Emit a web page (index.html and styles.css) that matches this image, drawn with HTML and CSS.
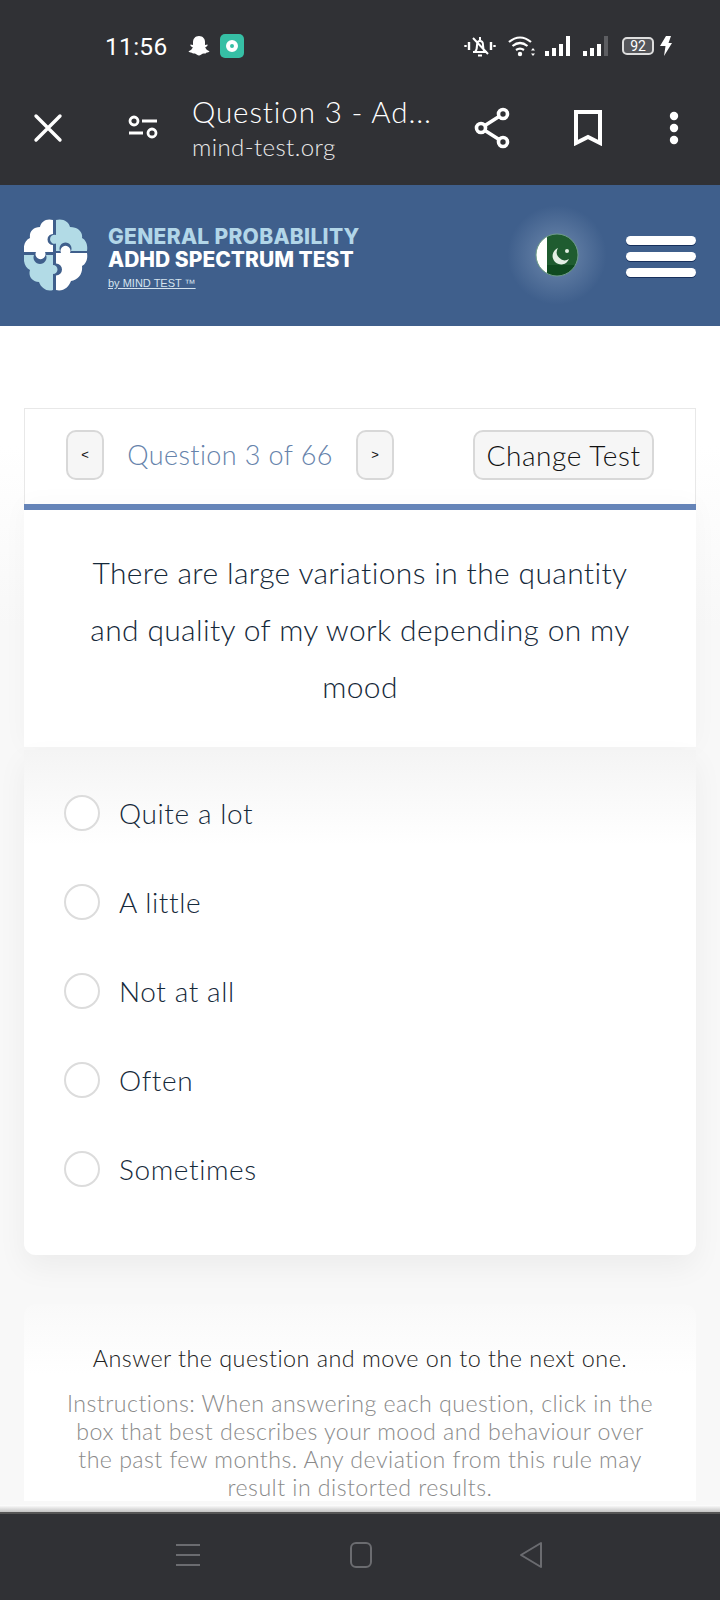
FILE: index.html
```html
<!DOCTYPE html>
<html lang="en">
<head>
    <meta charset="UTF-8">
    <meta name="viewport" content="width=device-width, initial-scale=1.0">
    <title>Question 3 - ADHD Spectrum Test</title>
    <link rel="stylesheet" href="styles.css">
</head>
<body>
    <div class="phone-top">
        <div class="status-bar">
            <div class="status-left">
                <span class="clock">11:56</span>
                <svg class="snap" viewBox="0 0 24 24"><path d="M12 2c4 0 6 3 6 6v3l2.500-.5c.5 1-.5 2-2.300 2.800.7 2 2 3.200 4.300 4-.3 1-1.800 1.200-3.300 1.500-.6 1.300-2 .5-3.700 1-1 .4-2 1.700-3.500 1.700s-2.500-1.300-3.500-1.700c-1.700-.5-3.100.3-3.700-1-1.500-.3-3-.5-3.300-1.500 2.300-.8 3.600-2 4.300-4C3.800 12.500 3 11.500 3.500 10.500L6 11V8c0-3 2-6 6-6z"/></svg>
                <span class="app-badge"><span class="app-disc"></span></span>
            </div>
            <div class="status-right">
                <svg class="ico-bell" viewBox="0 0 32 24" fill="none" stroke="#fff" stroke-width="2">
                    <path d="M9 18h14M11 18c2-2 2-4 2-7 0-2.500 1.300-4 3-4s3 1.500 3 4c0 3 0 5 2 7M14 21.500h4M16 3v3M9 4l15 16"/>
                    <path d="M5 8v8M1.500 11v2M27 8v8M30.500 11v2" stroke-width="2.400"/>
                </svg>
                <svg class="ico-wifi" viewBox="0 0 28 22" fill="none" stroke="#fff" stroke-width="2.200">
                    <path d="M1 7c7-6 15-6 22 0M4.500 11c5-4 10-4 15 0M8 15c3-2 5-2 8 0"/>
                    <circle cx="12" cy="19" r="2.200" fill="#fff" stroke="none"/>
                    <path d="M25 13l2 2.500h-4zM25 21l2-2.500h-4z" fill="#fff" stroke="none"/>
                </svg>
                <div class="signal">
                    <i class="h1"></i><i class="h2"></i><i class="h3"></i><i class="h4"></i>
                </div>
                <div class="signal">
                    <i class="h1"></i><i class="h2"></i><i class="h3"></i><i class="h4 dim"></i>
                </div>
                <div class="battery"><span class="battery-level">92</span></div>
                <svg class="ico-bolt" viewBox="0 0 13 20"><path d="M7 0h5L9.500 7H13L5 20l1.500-10H1z" fill="#fff"/></svg>
            </div>
        </div>
        <div class="browser-bar">
            <svg class="ico-close" viewBox="0 0 30 30" fill="none" stroke="#fff" stroke-width="3.400" stroke-linecap="round"><path d="M3 3l24 24M27 3L3 27"/></svg>
            <svg class="ico-site" viewBox="0 0 30 26" fill="none" stroke="#fff" stroke-width="2.800"><circle cx="6" cy="6" r="4"/><path d="M14 6h15M1 18h14"/><circle cx="24" cy="18" r="4"/></svg>
            <div class="page-title">
                <div class="page-name">Question 3 - Ad...</div>
                <div class="page-url">mind-test.org</div>
            </div>
            <svg class="ico-share" viewBox="0 0 38 42" fill="none" stroke="#fff" stroke-width="3.600"><path d="M8 21L30 7M8 21l22 14"/><circle cx="8" cy="21" r="4.500" fill="#303135"/><circle cx="30" cy="7" r="4.500" fill="#303135"/><circle cx="30" cy="35" r="4.500" fill="#303135"/></svg>
            <svg class="ico-mark" viewBox="0 0 28 36" fill="none" stroke="#fff" stroke-width="4"><path d="M2 2h24v31l-12-6-12 6z"/></svg>
            <svg class="ico-more" viewBox="0 0 10 34" fill="#fff"><circle cx="5" cy="5" r="4.200"/><circle cx="5" cy="17" r="4.200"/><circle cx="5" cy="29" r="4.200"/></svg>
        </div>
    </div>

    <div class="site-header">
        <svg class="logo" viewBox="0 0 64 72">
            <path fill="#fff" d="M29 1C22-1 17 3 16 8 9 8 5 13 6 19 1 21-1 27 0 33H12A5 5 0 1 0 21 33H29V26A5.500 5.500 0 1 1 29 15Z"/>
            <path fill="#b2dbe6" d="M32 1C39-1 45 3 46 8 54 8 59 13 58 19 62 21 64 26 63 32H47A6 6 0 1 0 36 32H32V24.500A4.500 4.500 0 1 1 32 16Z"/>
            <path fill="#b2dbe6" d="M0 36H10A6.500 6.500 0 1 0 22 36H29V46A4.500 4.500 0 1 1 29 55V71C23 73 17 69 15 63 8 63 4 57 6 51 1 49-1 42 0 36Z"/>
            <path fill="#fff" d="M32 71V56.500A5.500 5.500 0 1 0 32 44.500V34H37A5 5 0 1 1 46 34H63C64 40 62 45 58 47 59 55 54 61 47 62 45 68 39 73 32 71Z"/>
        </svg>
        <div class="brand">
            <div class="brand-top">GENERAL PROBABILITY</div>
            <div class="brand-main">ADHD SPECTRUM TEST</div>
            <a class="brand-by" href="#">by MIND TEST &#8482;</a>
        </div>
        <div class="flag-glow">
            <svg class="flag" viewBox="0 0 44 44">
                <clipPath id="flag-clip"><circle cx="22" cy="22" r="21"/></clipPath>
                <g clip-path="url(#flag-clip)">
                    <rect width="44" height="44" fill="#1f5c30"/>
                    <rect y="32" width="44" height="12" fill="#0f4a20"/>
                    <rect width="12" height="44" fill="#fff"/>
                </g>
                <circle cx="22" cy="22" r="21" fill="none" stroke="#6f9d8a" stroke-width="1"/>
                <path d="M23 15a8.500 8.500 0 1 0 11 11 8 8 0 0 1-11-11z" fill="#e4efe4"/>
                <circle cx="32" cy="18" r="2" fill="#e4efe4"/>
            </svg>
        </div>
        <div class="menu-btn"><span></span><span></span><span></span></div>
    </div>

    <div class="content">
        <div class="nav-box">
            <button class="arrow-btn">&lt;</button>
            <span class="counter">Question 3 of 66</span>
            <button class="arrow-btn">&gt;</button>
            <button class="change-btn">Change Test</button>
        </div>
        <div class="question">There are large variations in the quantity and quality of my work depending on my mood</div>
        <div class="options">
            <label class="option"><span class="radio"></span>Quite a lot</label>
            <label class="option"><span class="radio"></span>A little</label>
            <label class="option"><span class="radio"></span>Not at all</label>
            <label class="option"><span class="radio"></span>Often</label>
            <label class="option"><span class="radio"></span>Sometimes</label>
        </div>
        <div class="notes">
            <p class="notes-lead">Answer the question and move on to the next one.</p>
            <p class="notes-small">Instructions: When answering each question, click in the box that best describes your mood and behaviour over the past few months. Any deviation from this rule may result in distorted results.</p>
        </div>
    </div>

    <div class="phone-nav">
        <svg class="nav-menu" viewBox="0 0 24 24" fill="none" stroke="#6b6c70" stroke-width="2"><path d="M0 2h24M0 12h24M0 22h24"/></svg>
        <svg class="nav-home" viewBox="0 0 24 26" fill="none" stroke="#6b6c70" stroke-width="2"><rect x="2" y="1" width="20" height="24" rx="5"/></svg>
        <svg class="nav-back" viewBox="0 0 24 28" fill="none" stroke="#6b6c70" stroke-width="2" stroke-linejoin="round"><path d="M22 2v24L2 14z"/></svg>
    </div>
</body>
</html>
```

FILE: styles.css
```css
html, body {
    margin: 0;
    height: 100%;
}
body {
    width: 720px;
    height: 1600px;
    display: flex;
    flex-direction: column;
    overflow: hidden;
    background-color: #fff;
    font-family: Lato, "Open Sans", sans-serif;
    font-weight: 300;
}

/* phone chrome */
.phone-top {
    height: 185px;
    flex-shrink: 0;
    background-color: #303135;
    color: #fff;
}
.status-bar {
    height: 72px;
    padding: 20px 48px 0 105px;
    box-sizing: border-box;
    display: flex;
    justify-content: space-between;
    align-items: center;
}
.status-left, .status-right {
    display: flex;
    align-items: center;
}
.clock {
    font-family: Roboto, sans-serif;
    font-weight: 400;
    font-size: 24.500px;
    letter-spacing: 0.3px;
    margin-right: 19px;
}
.snap {
    width: 24px;
    height: 24px;
    fill: #fff;
    margin-right: 9px;
}
.app-badge {
    width: 24px;
    height: 24px;
    border-radius: 5px;
    background-color: #36bfa5;
    display: flex;
    align-items: center;
    justify-content: center;
}
.app-disc {
    width: 4px;
    height: 4px;
    border-radius: 50%;
    background-color: #36bfa5;
    border: 4px solid #fff;
}
.ico-bell {
    width: 32px;
    height: 24px;
    margin-right: 12px;
}
.ico-wifi {
    width: 28px;
    height: 22px;
    margin-right: 9px;
}
.signal {
    display: flex;
    align-items: flex-end;
    gap: 3px;
    height: 20px;
    margin-right: 13px;
}
.signal i {
    display: block;
    width: 4px;
    background-color: #fff;
}
.signal .h1 { height: 5px; }
.signal .h2 { height: 8px; }
.signal .h3 { height: 12px; }
.signal .h4 { height: 20px; }
.signal .dim { background-color: #5d5e62; }
.battery {
    width: 32px;
    height: 18px;
    box-sizing: border-box;
    border: 2px solid #ddd;
    border-radius: 5px;
    margin-left: 1px;
    margin-right: 5px;
    background-color: #55565a;
    display: flex;
    align-items: center;
    justify-content: center;
}
.battery-level {
    font-family: Roboto, sans-serif;
    font-weight: 400;
    font-size: 14px;
}
.ico-bolt {
    width: 13px;
    height: 20px;
}
.browser-bar {
    height: 113px;
    display: flex;
    align-items: center;
    box-sizing: border-box;
    padding-bottom: 1px;
}
.ico-close {
    width: 30px;
    height: 30px;
    margin-left: 33px;
}
.ico-site {
    width: 30px;
    height: 26px;
    margin-left: 65px;
}
.page-title {
    width: 260px;
    margin-left: 34px;
}
.page-name {
    font-size: 29.500px;
    letter-spacing: 0.9px;
    line-height: 38px;
    white-space: nowrap;
}
.page-url {
    font-size: 24px;
    letter-spacing: 0.4px;
    line-height: 32px;
    opacity: 0.9;
}
.ico-share {
    width: 38px;
    height: 42px;
    margin-left: 21px;
}
.ico-mark {
    width: 28px;
    height: 36px;
    margin-left: 63px;
}
.ico-more {
    width: 10px;
    height: 34px;
    margin-left: 67px;
}

/* site header */
.site-header {
    height: 141px;
    flex-shrink: 0;
    background-color: #3f5f8c;
    display: flex;
    align-items: flex-start;
    position: relative;
}
.logo {
    width: 64px;
    height: 72px;
    margin: 34px 0 0 24px;
}
.brand {
    margin: 40px 0 0 20px;
    width: 300px;
    font-family: Inter, sans-serif;
    font-weight: 800;
}
.brand-top {
    font-size: 21px;
    letter-spacing: 0.3px;
    line-height: 23px;
    color: #b2d6e8;
    white-space: nowrap;
}
.brand-main {
    font-size: 21px;
    line-height: 23px;
    color: #fff;
    white-space: nowrap;
}
.brand-by {
    display: block;
    margin-top: 6px;
    font-family: "Liberation Sans", sans-serif;
    font-weight: 400;
    font-size: 11px;
    color: #d5e3ee;
}
.flag-glow {
    width: 100px;
    height: 100px;
    margin: 20px 0 0 99px;
    display: flex;
    align-items: center;
    justify-content: center;
    background: radial-gradient(circle, #7791b6 0%, #5a779f 30%, #3f5f8c 70%);
}
.flag {
    width: 44px;
    height: 44px;
}
.menu-btn {
    margin: 51px 0 0 19px;
    width: 70px;
    display: flex;
    flex-direction: column;
    gap: 7px;
}
.menu-btn span {
    display: block;
    height: 9px;
    border-radius: 5px;
    background-color: #fff;
    box-shadow: 0 1px 0 #17305c;
}

/* page */
.content {
    flex: 1;
    min-height: 0;
    overflow: hidden;
    padding: 82px 24px 0;
    font-family: Lato, sans-serif;
    background: linear-gradient(#fff 120px, #f8f8f8 300px);
}
.nav-box {
    height: 96px;
    box-sizing: border-box;
    background-color: #fff;
    border: 1px solid #e8e8e8;
    border-bottom: none;
    display: flex;
    align-items: center;
    padding: 0 41px 4px 41px;
}
.arrow-btn {
    width: 38px;
    height: 50px;
    box-sizing: border-box;
    padding: 0;
    border: 2px solid #d8d8d8;
    border-radius: 10px;
    background-color: #f6f6f6;
    color: #111;
    font-family: "Liberation Sans", sans-serif;
    font-size: 13px;
}
.counter {
    width: 252px;
    text-align: center;
    font-size: 27px;
    letter-spacing: 0.4px;
    color: #6683ab;
    white-space: nowrap;
}
.change-btn {
    margin-left: auto;
    width: 181px;
    height: 50px;
    box-sizing: border-box;
    padding: 0;
    border: 2px solid #d8d8d8;
    border-radius: 10px;
    background-color: #f6f6f6;
    color: #111;
    font-family: Lato, sans-serif;
    font-weight: 300;
    font-size: 28px;
    letter-spacing: 0.6px;
    white-space: nowrap;
}
.question {
    background-color: #fff;
    border-top: 6px solid #6584b8;
    height: 243px;
    box-sizing: border-box;
    padding: 34px 60px 0;
    text-align: center;
    font-size: 30px;
    letter-spacing: 0.35px;
    line-height: 57px;
    color: #15293a;
    box-shadow: 0 0 24px rgba(0, 0, 0, 0.03);
}
.options {
    margin-top: 3px;
    height: 505px;
    box-sizing: border-box;
    padding: 18px 0 0 40px;
    border-radius: 0 0 12px 12px;
    background: linear-gradient(#f4f4f4 0, #fff 95px);
    box-shadow: 0 12px 30px rgba(0, 0, 0, 0.05);
}
.option {
    display: flex;
    align-items: center;
    gap: 19px;
    height: 89px;
    font-size: 28px;
    letter-spacing: 0.6px;
    color: #15293a;
}
.radio {
    width: 36px;
    height: 36px;
    box-sizing: border-box;
    border: 2px solid #dcdcdc;
    border-radius: 50%;
    background-color: #fff;
}
.notes {
    margin-top: 49px;
    padding: 40px 36px 0;
    border-radius: 12px 12px 0 0;
    background: linear-gradient(#f9f9f9 0, #fff 70px);
    text-align: center;
}
.notes p {
    margin: 0;
}
.notes-lead {
    font-size: 23.400px;
    letter-spacing: 0.45px;
    line-height: 28px;
    color: #222;
    white-space: nowrap;
}
.notes-small {
    padding-top: 17px;
    font-size: 23.200px;
    letter-spacing: 0.45px;
    line-height: 28px;
    color: #8a8a8a;
}

/* phone nav */
.phone-nav {
    position: relative;
    height: 88px;
    flex-shrink: 0;
    background-color: #303135;
    border-top: 2px solid #555;
    box-sizing: border-box;
    display: flex;
    align-items: center;
    padding-bottom: 4px;
}
.phone-nav::before {
    content: "";
    position: absolute;
    left: 0;
    right: 0;
    top: -9px;
    height: 7px;
    background: linear-gradient(#fff, #c4c4c4);
}
.nav-menu {
    width: 24px;
    height: 24px;
    margin-left: 176px;
}
.nav-home {
    width: 24px;
    height: 26px;
    margin-left: 149px;
}
.nav-back {
    width: 26px;
    height: 28px;
    margin-left: 145px;
}
```
